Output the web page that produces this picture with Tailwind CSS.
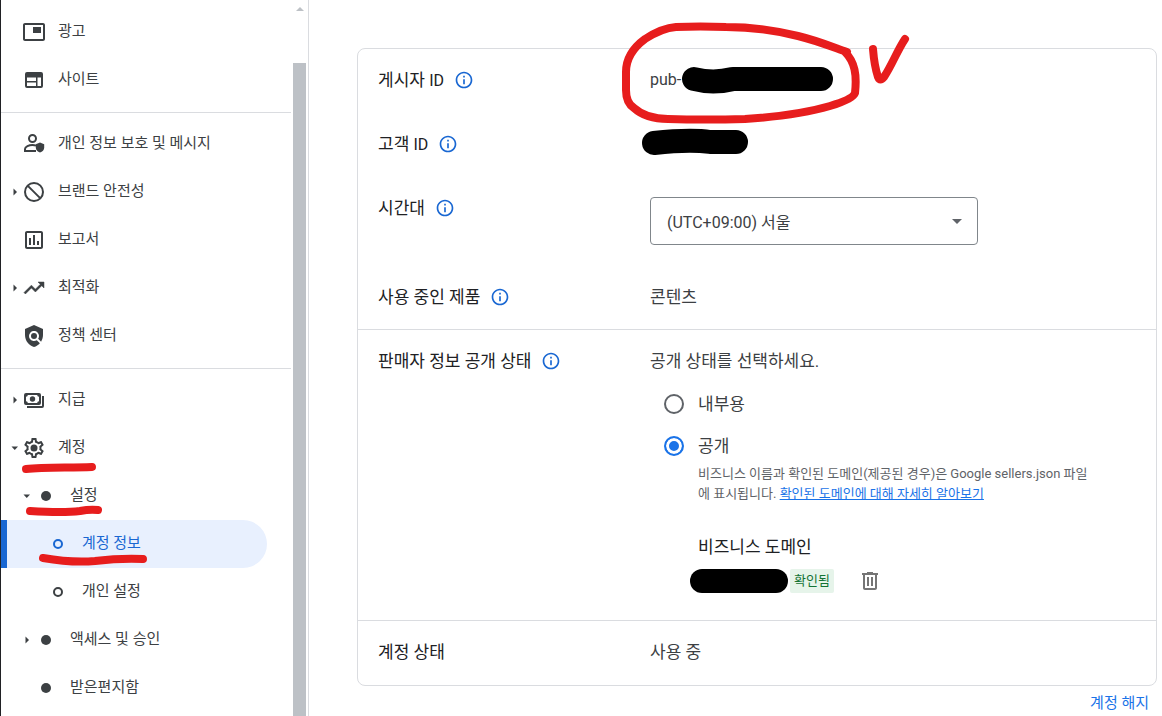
<!DOCTYPE html>
<html lang="ko">
<head>
<meta charset="utf-8">
<meta name="viewport" content="width=device-width, initial-scale=1">
<title>계정 정보</title>
<script src="https://cdn.jsdelivr.net/npm/@tailwindcss/browser@4"></script>
</head>
<body class="bg-white font-['Roboto','Noto_Sans_CJK_KR',sans-serif] text-[#3c4043]">
<svg class="hidden">
  <symbol id="info" viewBox="0 0 24 24"><path d="M11 7h2v2h-2zm0 4h2v6h-2zm1-9C6.48 2 2 6.48 2 12s4.48 10 10 10 10-4.48 10-10S17.520 2 12 2zm0 18c-4.410 0-8-3.590-8-8s3.590-8 8-8 8 3.590 8 8-3.590 8-8 8z"/></symbol>
  <symbol id="right" viewBox="0 0 8 8"><path d="M3.500 0.500v7L7 4z"/></symbol>
  <symbol id="down" viewBox="0 0 8 8"><path d="M1.500 2.500h6.500L4.750 6z"/></symbol>
</svg>
<div class="relative flex h-screen overflow-hidden">
  <aside class="flex w-[309px] shrink-0 border-r border-[#dadce0] border-l border-l-[#202124]">
    <nav class="w-[290px] pt-2 text-[15px] leading-5">
      <a href="#" class="flex h-12 items-center pb-0.5 pl-[21px]"><svg class="mt-0.5 size-6" viewBox="0 0 24 24" fill="currentColor"><path d="M19 7h-8v6h8V7zm2-4H3c-1.100 0-2 .9-2 2v14c0 1.100.9 2 2 2h18c1.100 0 2-.9 2-2V5c0-1.100-.9-2-2-2zm0 16H3V5h18v14z"/></svg><span class="ml-3">광고</span></a>
      <a href="#" class="flex h-12 items-center pb-0.5 pl-[21px]"><svg class="mt-0.5 size-6" viewBox="0 0 24 24" fill="currentColor"><path fill-rule="evenodd" d="M5 4h14a2 2 0 0 1 2 2v12a2 2 0 0 1-2 2H5a2 2 0 0 1-2-2V6a2 2 0 0 1 2-2zm0 5.500v3.500h9V9.500zm0 5V18h9v-3.500zm10.500-5V18H19V9.500z"/></svg><span class="ml-3">사이트</span></a>
      <hr class="mt-2 mb-[7px] border-[#dadce0]">
      <a href="#" class="flex h-12 items-center pb-0.5 pl-[21px]"><svg class="mt-0.5 size-6" viewBox="0 0 24 24"><g fill="none" stroke="currentColor" stroke-width="2"><circle cx="10.500" cy="6.500" r="3.500"/><path d="M14 13.600c-1.100-.4-2.300-.6-3.500-.6C7 13 3 14.600 3 17v2h11"/></g><path fill="currentColor" d="M18 10.500l4.200 1.800v3.200c0 2.600-1.800 4.500-4.200 5-2.400-.5-4.200-2.400-4.200-5v-3.200z"/></svg><span class="ml-3">개인 정보 보호 및 메시지</span></a>
      <a href="#" class="flex h-12 items-center pb-0.5 pl-[9px]"><svg class="mt-0.5 mr-1 size-2" fill="currentColor"><use href="#right"/></svg><svg class="mt-0.5 size-6" viewBox="0 0 24 24" fill="none" stroke="currentColor" stroke-width="2"><circle cx="12" cy="12" r="9"/><path d="M5.600 5.600l12.800 12.800"/></svg><span class="ml-3">브랜드 안전성</span></a>
      <a href="#" class="flex h-12 items-center pb-0.5 pl-[21px]"><svg class="mt-0.5 size-6" viewBox="0 0 24 24" fill="currentColor"><path d="M19 3H5c-1.100 0-2 .9-2 2v14c0 1.100.9 2 2 2h14c1.100 0 2-.9 2-2V5c0-1.100-.9-2-2-2zm0 16H5V5h14v14zM7 10h2v7H7zm4-3h2v10h-2zm4 6h2v4h-2z"/></svg><span class="ml-3">보고서</span></a>
      <a href="#" class="flex h-12 items-center pb-0.5 pl-[9px]"><svg class="mt-0.5 mr-1 size-2" fill="currentColor"><use href="#right"/></svg><svg class="mt-0.5 size-6" viewBox="0 0 24 24" fill="currentColor" stroke="currentColor" stroke-width=".5"><path d="M16 6l2.290 2.290-4.880 4.880-4-4L2 16.590 3.410 18l6-6 4 4 6.300-6.290L22 12V6z"/></svg><span class="ml-3">최적화</span></a>
      <a href="#" class="flex h-12 items-center pb-0.5 pl-[21px]"><svg class="mt-0.5 size-6" viewBox="0 0 24 24" fill="currentColor"><path d="M21 5l-9-4-9 4v6c0 5.550 3.840 10.740 9 12 2.300-.56 4.330-1.900 5.880-3.710l-3.120-3.120c-1.940 1.290-4.580 1.070-6.290-.64-1.950-1.950-1.950-5.120 0-7.070 1.950-1.950 5.120-1.950 7.070 0 1.710 1.710 1.920 4.350.64 6.290l2.900 2.900C20.290 15.690 21 13.380 21 11V5z"/><circle cx="12" cy="12" r="3"/></svg><span class="ml-3">정책 센터</span></a>
      <hr class="mt-2 mb-[7px] border-[#dadce0]">
      <a href="#" class="flex h-12 items-center pb-0.5 pl-[9px]"><svg class="mt-0.5 mr-1 size-2" fill="currentColor"><use href="#right"/></svg><svg class="mt-0.5 size-6" viewBox="0 0 24 24" fill="currentColor"><path fill-rule="evenodd" d="M4 5h13a2 2 0 0 1 2 2v8a2 2 0 0 1-2 2H4a2 2 0 0 1-2-2V7a2 2 0 0 1 2-2zm1.800 2A1.800 1.800 0 0 1 4 8.800v4.400A1.800 1.800 0 0 1 5.800 15h9.400a1.800 1.800 0 0 1 1.800-1.800V8.800A1.800 1.800 0 0 1 15.200 7z"/><circle cx="10.500" cy="11" r="2.700"/><path d="M20 8h2v10a2 2 0 0 1-2 2H5v-2h15z"/></svg><span class="ml-3">지급</span></a>
      <a href="#" class="flex h-12 items-center pb-0.5 pl-[9px]"><svg class="mt-0.5 mr-1 size-2" fill="currentColor"><use href="#down"/></svg><svg class="mt-0.5 size-6" viewBox="0 0 24 24" fill="currentColor"><path d="M19.430 12.980c.04-.32.070-.64.070-.98s-.03-.66-.07-.98l2.110-1.650c.19-.15.24-.42.120-.64l-2-3.460c-.12-.22-.39-.3-.61-.22l-2.490 1c-.52-.4-1.080-.73-1.690-.98l-.38-2.650C14.460 2.180 14.250 2 14 2h-4c-.25 0-.46.180-.49.420l-.38 2.650c-.61.25-1.170.59-1.690.98l-2.490-1c-.23-.09-.49 0-.61.220l-2 3.460c-.13.220-.07.490.12.640l2.110 1.650c-.04.320-.07.650-.07.980s.03.660.070.980l-2.110 1.650c-.19.150-.24.420-.12.640l2 3.460c.12.220.39.300.61.220l2.490-1c.52.400 1.080.730 1.690.980l.38 2.650c.03.240.24.420.49.420h4c.25 0 .46-.18.490-.42l.38-2.650c.61-.25 1.170-.59 1.690-.98l2.490 1c.23.090.49 0 .61-.22l2-3.460c.12-.22.070-.49-.12-.64l-2.110-1.650zm-1.980-1.710c.04.310.05.520.05.730 0 .21-.02.430-.05.730l-.14 1.130.89.700 1.080.84-.7 1.210-1.270-.51-1.040-.42-.9.680c-.43.320-.84.560-1.250.730l-1.060.43-.16 1.130-.2 1.350h-1.400l-.19-1.350-.16-1.130-1.060-.43c-.43-.18-.83-.41-1.230-.71l-.91-.7-1.060.43-1.270.51-.7-1.210 1.080-.84.890-.7-.14-1.130c-.03-.31-.05-.54-.05-.74s.02-.43.050-.73l.14-1.130-.89-.7-1.080-.84.7-1.210 1.270.51 1.040.42.900-.68c.43-.32.840-.56 1.250-.73l1.060-.43.160-1.130.2-1.350h1.390l.19 1.350.16 1.130 1.060.43c.43.180.83.410 1.230.71l.91.700 1.060-.43 1.270-.51.7 1.210-1.070.85-.89.700.14 1.130z"/><circle cx="12" cy="12" r="3.500"/></svg><span class="ml-3">계정</span></a>
      <a href="#" class="flex h-12 items-center pb-0.5 pl-[21px]"><svg class="mt-0.5 size-2" fill="currentColor"><use href="#down"/></svg><i class="mt-0.5 ml-[11px] size-[10px] rounded-full bg-[#3c4043]"></i><span class="ml-[19px]">설정</span></a>
      <a href="#" aria-current="page" class="mr-6 flex h-12 items-center rounded-r-full border-l-6 border-[#1967d2] bg-[#e8f0fe] pb-0.5 pl-[46px] text-[#1967d2]"><i class="mt-0.5 size-[10px] rounded-full border-2 border-[#1967d2]"></i><span class="ml-[19px]">계정 정보</span></a>
      <a href="#" class="flex h-12 items-center pb-0.5 pl-[52px]"><i class="mt-0.5 size-[10px] rounded-full border-2 border-[#3c4043]"></i><span class="ml-[19px]">개인 설정</span></a>
      <a href="#" class="flex h-12 items-center pb-0.5 pl-[21px]"><svg class="mt-0.5 size-2" fill="currentColor"><use href="#right"/></svg><i class="mt-0.5 ml-[11px] size-[10px] rounded-full bg-[#3c4043]"></i><span class="ml-[19px]">액세스 및 승인</span></a>
      <a href="#" class="flex h-12 items-center pb-0.5 pl-10"><i class="mt-0.5 size-[10px] rounded-full bg-[#3c4043]"></i><span class="ml-[19px]">받은편지함</span></a>
    </nav>
    <div class="ml-[2px] flex w-[13px] flex-col items-center">
      <svg class="mt-[7px] h-1 w-2" viewBox="0 0 8 4" fill="#bdc1c6"><path d="M0 4L4 0l4 4z"/></svg>
      <div class="mt-[52px] w-full flex-1 bg-[#bdc1c6]"></div>
    </div>
  </aside>

  <main class="min-w-0 flex-1 pt-12 pr-[5px] pl-12 text-[17px] leading-6">
    <div class="rounded-lg border border-[#dadce0]">
      <section class="grid grid-cols-[272px_1fr] gap-y-10 border-b border-[#dadce0] px-5 pt-[19px] pb-5">
        <div class="flex h-6 items-center gap-2.5 text-[#202124]"><span>게시자 <span class="text-base">ID</span></span><button aria-label="게시자 ID 도움말"><svg class="block size-5" fill="#1967d2"><use href="#info"/></svg></button></div>
        <div class="text-base leading-6">pub-</div>
        <div class="flex h-6 items-center gap-2.5 text-[#202124]"><span>고객 <span class="text-base">ID</span></span><button aria-label="고객 ID 도움말"><svg class="block size-5" fill="#1967d2"><use href="#info"/></svg></button></div>
        <div></div>
        <div class="flex h-6 items-center gap-2.5 text-[#202124]"><label for="tz">시간대</label><button aria-label="시간대 도움말"><svg class="block size-5" fill="#1967d2"><use href="#info"/></svg></button></div>
        <div class="relative w-[328px] pt-px">
          <select id="tz" class="block h-12 w-full appearance-none rounded border border-[#80868b] bg-white px-4 pt-1 text-base"><option>(UTC+09:00) 서울</option></select>
          <svg class="pointer-events-none absolute top-[23px] right-4 h-[5px] w-[10px]" viewBox="0 0 10 5" fill="#5f6368"><path d="M0 0h10L5 5z"/></svg>
        </div>
        <div class="flex h-6 items-center gap-2.5 text-[#202124]"><span>사용 중인 제품</span><button aria-label="사용 중인 제품 도움말"><svg class="block size-5" fill="#1967d2"><use href="#info"/></svg></button></div>
        <div>콘텐츠</div>
      </section>
      <section class="grid grid-cols-[272px_1fr] border-b border-[#dadce0] px-5 pt-[19px] pb-[26px]">
        <div class="flex h-6 items-center gap-2.5 text-[#202124]"><span>판매자 정보 공개 상태</span><button aria-label="판매자 정보 공개 상태 도움말"><svg class="block size-5" fill="#1967d2"><use href="#info"/></svg></button></div>
        <div>
          <p>공개 상태를 선택하세요.</p>
          <label class="mt-[19px] flex items-center gap-[14px] pl-[14px]"><input type="radio" name="vis" class="size-5 appearance-none rounded-full border-2 border-[#5f6368]">내부용</label>
          <label class="mt-[18px] flex items-center gap-[14px] pl-[14px]"><input type="radio" name="vis" checked class="size-5 appearance-none rounded-full border-2 border-[#1a73e8] bg-[#1a73e8] shadow-[inset_0_0_0_3px_white]">공개</label>
          <div class="pl-12">
            <p class="mt-1.5 max-w-[400px] text-[13px] leading-5 text-[#5f6368]">비즈니스 이름과 확인된 도메인(제공된 경우)은 Google sellers.json 파일에 표시됩니다. <a href="#" class="text-[#1a73e8] underline">확인된 도메인에 대해 자세히 알아보기</a></p>
            <h2 class="mt-[31px] text-[#202124]">비즈니스 도메인</h2>
            <div class="mt-2.5 flex items-center pb-px">
              <span class="-ml-2 h-6 w-[98px] rounded-full bg-black"></span>
              <span class="ml-[2px] rounded-xs bg-[#e6f4ea] px-1 text-[13px] leading-6 text-[#137333]">확인됨</span>
              <button class="ml-6" aria-label="삭제"><svg class="block size-6" viewBox="0 0 24 24" fill="#757575"><path d="M15 4V3H9v1H4v2h1v13c0 1.100.9 2 2 2h10c1.100 0 2-.9 2-2V6h1V4h-5zm2 15H7V6h10v13zM9 8h2v9H9zm4 0h2v9h-2z"/></svg></button>
            </div>
          </div>
        </div>
      </section>
      <section class="grid grid-cols-[272px_1fr] px-5 pt-[19px] pb-[21px]">
        <div class="text-[#202124]">계정 상태</div>
        <div>사용 중</div>
      </section>
    </div>
    <div class="mt-[5px] pr-2 text-right text-[15px] leading-6"><a href="#" class="text-[#1a73e8]">계정 해지</a></div>
  </main>

  <!-- Hand-drawn markings laid over the page -->
  <svg class="pointer-events-none absolute top-0 left-0" width="1162" height="716" fill="none" stroke-linecap="round" stroke-linejoin="round">
    <g stroke="#e71d1d" stroke-width="8">
      <path d="M847 52C830 46 815 40 798 36C770 29 745 27 726 27Q700 26 676 27Q662 28 645 39Q626 53 626 72V90Q626 103 634 108Q646 119 668 119Q705 120 745 119C775 117 806 113 830 106Q853 99 855 93C857 75 855 62 845 52"/>
      <path d="M873 49C874 62 876 71 878 77Q880 82 884 77C892 65 897 51 905 39"/>
      <path d="M26 469C45 467 70 468 92 467"/>
      <path d="M30 511C45 512 65 513 80 511Q90 509 98 510"/>
      <path d="M43 558Q72 563 95 561Q120 558 143 559"/>
    </g>
    <g stroke="#000" stroke-width="24">
      <path d="M694 79Q713 84 733 79H821"/>
      <path d="M654 143Q690 139 710 142H736"/>
    </g>
  </svg>
</div>
</body>
</html>
